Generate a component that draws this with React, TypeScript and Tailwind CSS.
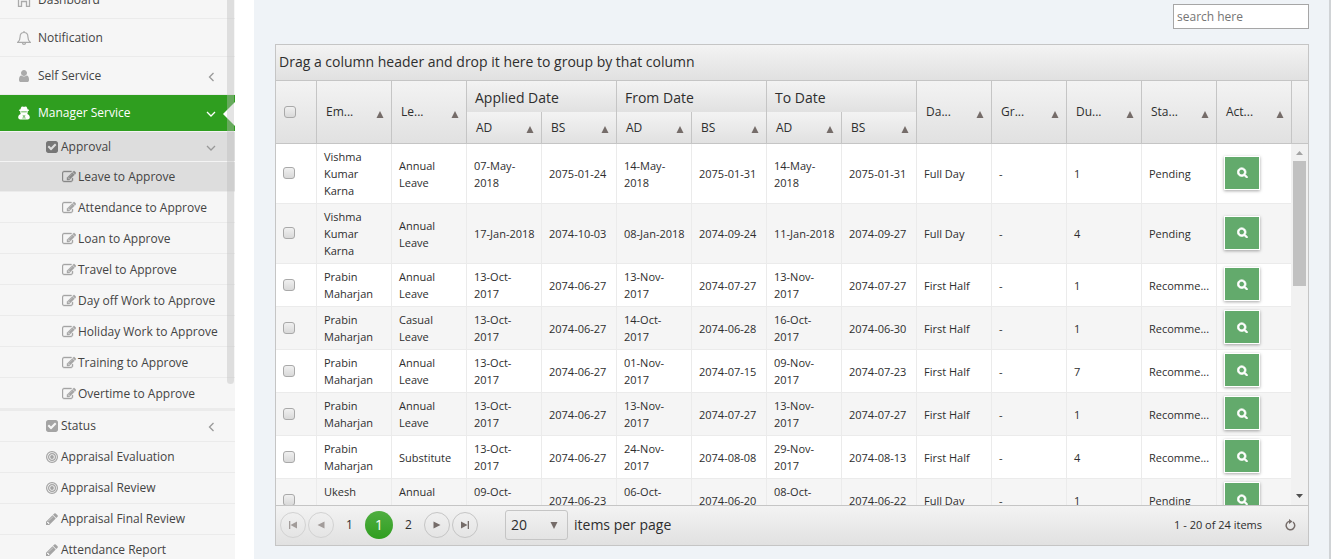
import React from "react";

const GLYPHS = {
  search:
    "M1216 832q0-185-131.5-316.5t-316.5-131.5-316.5 131.5-131.5 316.5 131.5 316.5 316.5 131.5 316.5-131.5 131.5-316.5zm512 832q0 52-38 90t-90 38q-54 0-90-38l-343-342q-179 124-399 124-143 0-273.5-55.5t-225-150-150-225-55.5-273.5 55.5-273.5 150-225 225-150 273.5-55.5 273.5 55.5 225 150 150 225 55.5 273.5q0 220-124 399l343 343q37 37 37 90z",
  check:
    "M813 1299l614-614q19-19 19-45t-19-45l-102-102q-19-19-45-19t-45 19l-467 467-211-211q-19-19-45-19t-45 19l-102 102q-19 19-19 45t19 45l358 358q19 19 45 19t45-19zm851-883v960q0 119-84.5 203.5t-203.5 84.5h-960q-119 0-203.5-84.5t-84.5-203.5v-960q0-119 84.5-203.5t203.5-84.5h960q119 0 203.5 84.5t84.5 203.5z",
  edit: "M888 1184l116-116-152-152-116 116v56h96v96h56zm440-720q-16-16-33 1l-350 350q-17 17-1 33t33-1l350-350q17-17 1-33zm80 594v190q0 119-84.5 203.5t-203.5 84.5h-832q-119 0-203.5-84.5t-84.5-203.5v-832q0-119 84.5-203.5t203.5-84.5h832q63 0 117 25 15 7 18 23 3 17-9 29l-49 49q-14 14-32 8-23-6-45-6h-832q-66 0-113 47t-47 113v832q0 66 47 113t113 47h832q66 0 113-47t47-113v-126q0-13 9-22l64-64q15-15 35-7t20 29zm-96-738l288 288-672 672h-288v-288zm444 132l-92 92-288-288 92-92q28-28 68-28t68 28l152 152q28 28 28 68t-28 68z",
  pencil:
    "M491 1536l91-91-235-235-91 91v107h128v128h107zm523-928q0-22-22-22-10 0-17 7l-542 542q-7 7-7 17 0 22 22 22 10 0 17-7l542-542q7-7 7-17zm-54-192l416 416-832 832h-416v-416zm683 96q0 53-37 90l-166 166-416-416 166-165q36-38 90-38 53 0 91 38l235 234q37 39 37 91z",
  user: "M1536 1399q0 109-62.5 187t-150.5 78h-854q-88 0-150.5-78t-62.5-187q0-85 8.500-160.5t31.5-152 58.5-131 94-89 134.5-34.5q131 128 313 128t313-128q76 0 134.5 34.5t94 89 58.5 131 31.5 152 8.500 160.5zm-256-887q0 159-112.5 271.5t-271.5 112.5-271.5-112.5-112.5-271.5 112.5-271.5 271.5-112.5 271.5 112.5 112.5 271.5z",
};

function Glyph({ name, className }: { name: keyof typeof GLYPHS; className: string }) {
  return (
    <svg viewBox="0 0 1792 1792" fill="currentColor" stroke="currentColor" className={className} aria-hidden="true">
      <path d={GLYPHS[name]} />
    </svg>
  );
}

function Home() {
  return (
    <svg viewBox="0 0 14 14" fill="none" stroke="currentColor" strokeWidth="1.3" className="size-[14px]" aria-hidden="true">
      <path d="M1.500 5.500 7 1l5.500 4.500V13.300H9.500V8.500h-5v4.800h-3z" />
    </svg>
  );
}

function Bell() {
  return (
    <svg viewBox="0 0 14 14" fill="none" stroke="currentColor" strokeWidth="1.2" className="size-[14px]" aria-hidden="true">
      <path d="M7 0v1.500M.8 11.300c1.700-1.300 2.300-3 2.300-5.500C3.100 3.300 4.700 1.500 7 1.500s3.900 1.800 3.900 4.300c0 2.500.6 4.200 2.300 5.500zM5.400 11.600c.1 1.100.7 1.800 1.600 1.800s1.500-.7 1.600-1.800" />
    </svg>
  );
}

function Agent() {
  return (
    <svg viewBox="0 0 14 14" fill="currentColor" fillRule="evenodd" className="mr-[7px] size-[14px]" aria-hidden="true">
      <path d="M4.600.8C5.300.2 6.200.8 7 .8s1.700-.6 2.400 0c.6.600.9 1.500 1.100 2.500 1 .2 1.600.5 1.600.9 0 .5-.6.8-1.400 1v1.200c0 .6-.2 1.100-.5 1.600 1.600.5 2.600 1.500 2.600 3.600 0 1.100-.8 1.900-2 1.900H3.200c-1.200 0-2-.8-2-1.900 0-2.100 1-3.100 2.600-3.600-.3-.5-.5-1-.5-1.600V5.200c-.8-.2-1.400-.5-1.400-1 0-.4.600-.7 1.600-.9.2-1 .5-1.900 1.100-2.500zM4.200 5.600v.6h5.600v-.6zM5.300 8.700l.8 1-.5 3h.7L6.700 9.500zM8.700 8.700l-.8 1 .5 3h-.7L7.300 9.500z" />
    </svg>
  );
}

function Bullseye() {
  return (
    <svg viewBox="0 0 12 12" fill="none" stroke="currentColor" strokeWidth="1.200" className="size-3" aria-hidden="true">
      <circle cx="6" cy="6" r="5.400" />
      <circle cx="6" cy="6" r="3.400" />
      <circle cx="6" cy="6" r="1.900" fill="currentColor" stroke="none" />
    </svg>
  );
}

function Chevron({ dir }: { dir: "left" | "down" }) {
  return (
    <svg viewBox="0 0 10 10" fill="none" stroke="currentColor" strokeWidth="1.3" className="mt-[2px] size-[10px]" aria-hidden="true">
      <path d={dir === "left" ? "M7.500 1 3.500 5l4 4" : "M1 3 5 7l4-4"} />
    </svg>
  );
}

const NAV_ROW = "flex items-center text-[12px] leading-4 text-[#444]";

function TopLink({ icon, label, children }: { icon: React.ReactNode; label: string; children?: React.ReactNode }) {
  return (
    <a href="#" className={`${NAV_ROW} h-[38px] border-b border-[#ebebeb] pr-[19px] pl-[17px]`}>
      <span className="mr-[7px] flex w-[14px] justify-center text-[#aaa]">{icon}</span>
      {label}
      <span className="ml-auto text-[#999]">{children}</span>
    </a>
  );
}

function SubLink({ icon, label, children }: { icon: React.ReactNode; label: string; children?: React.ReactNode }) {
  return (
    <a href="#" className={`${NAV_ROW} h-[31px] border-b border-[#ebebeb] pr-[19px] pl-[46px]`}>
      <span className="mr-[3px] flex w-3 justify-center text-[#a4a4a4]">{icon}</span>
      {label}
      <span className="ml-auto text-[#999]">{children}</span>
    </a>
  );
}

const APPROVALS = [
  "Attendance to Approve",
  "Loan to Approve",
  "Travel to Approve",
  "Day off Work to Approve",
  "Holiday Work to Approve",
  "Training to Approve",
  "Overtime to Approve",
];

function Sidebar() {
  return (
    <aside className="relative w-[235px] shrink-0 overflow-hidden bg-[#f6f6f6]">
      <nav className="-mt-[19px]">
        <TopLink icon={<Home />} label="Dashboard" />
        <TopLink icon={<Bell />} label="Notification" />
        <TopLink icon={<Glyph name="user" className="size-[14px]" />} label="Self Service">
          <Chevron dir="left" />
        </TopLink>
        <a href="#" className="relative flex h-9 items-center bg-[#2f9e1f] pr-[19px] pl-[17px] text-[12px] leading-4 text-white">
          <Agent />
          Manager Service
          <span className="ml-auto">
            <Chevron dir="down" />
          </span>
          <svg viewBox="0 0 12 24" className="absolute top-[7px] right-0 h-6 w-3 fill-white" aria-hidden="true">
            <path d="M12 0v24L0 12z" />
          </svg>
        </a>
        <a href="#" className={`${NAV_ROW} h-[31px] border-y border-[#f4f4f4] bg-[#ddd] pr-[19px] pl-[46px]`}>
          <Glyph name="check" className="mr-[2px] -ml-px size-[14px] text-[#777]" />
          Approval
          <span className="ml-auto text-[#999]">
            <Chevron dir="down" />
          </span>
        </a>
        <a href="#" className={`${NAV_ROW} h-[30px] border-b border-[#ebebeb] bg-[#ddd] pl-[62px]`}>
          <Glyph name="edit" className="mr-[2px] size-[14px] [stroke-width:50px] text-[#888]" />
          Leave to Approve
        </a>
        {APPROVALS.map((label) => (
          <a key={label} href="#" className={`${NAV_ROW} h-[31px] border-b border-[#ebebeb] pt-px pl-[62px]`}>
            <Glyph name="edit" className="mr-[2px] size-[14px] [stroke-width:50px] text-[#a4a4a4]" />
            {label}
          </a>
        ))}
        <div className="border-t-2 border-[#ebebeb]">
          <SubLink icon={<Glyph name="check" className="size-[14px] shrink-0" />} label="Status">
            <Chevron dir="left" />
          </SubLink>
          <SubLink icon={<Bullseye />} label="Appraisal Evaluation" />
          <SubLink icon={<Bullseye />} label="Appraisal Review" />
          <SubLink icon={<Glyph name="pencil" className="size-[14px] shrink-0" />} label="Appraisal Final Review" />
          <SubLink icon={<Glyph name="pencil" className="size-[14px] shrink-0" />} label="Attendance Report" />
        </div>
      </nav>
      <div className="absolute top-0 right-px h-[384px] w-[7px] rounded-b-[4px] bg-[#bbb]/40" />
    </aside>
  );
}

const BOX =
  "block size-3 appearance-none rounded-[3px] border border-[#a9a9a9] bg-linear-to-b from-[#f0f0f0] to-[#d9d9d9] checked:bg-[#2f9e1f]";
const GRAD = "bg-linear-to-b from-[#f3f3f3] to-[#e1e1e1]";

function SortArrow() {
  return (
    <svg viewBox="0 0 8 7" className="mt-1 h-[7px] w-2 shrink-0 fill-[#756c69]" aria-hidden="true">
      <path d="M4 0 7.500 7H.5z" />
    </svg>
  );
}

function SortHead({ label, rowSpan }: { label: string; rowSpan?: number }) {
  return (
    <th rowSpan={rowSpan} className={`border-l border-[#c5c5c5] p-0 font-normal ${GRAD}`}>
      <button type="button" className="flex w-full items-center justify-between pr-[7px] pl-[9px] text-[12px] leading-4">
        {label}
        <SortArrow />
      </button>
    </th>
  );
}

function Columns() {
  return (
    <colgroup>
      <col className="w-10" />
      {Array.from({ length: 13 }, (_, i) => (
        <col key={i} />
      ))}
    </colgroup>
  );
}

const ROWS = [
  ["Vishma Kumar Karna", "Annual Leave", "07-May-2018", "2075-01-24", "14-May-2018", "2075-01-31", "14-May-2018", "2075-01-31", "Full Day", "-", "1", "Pending"],
  ["Vishma Kumar Karna", "Annual Leave", "17-Jan-2018", "2074-10-03", "08-Jan-2018", "2074-09-24", "11-Jan-2018", "2074-09-27", "Full Day", "-", "4", "Pending"],
  ["Prabin Maharjan", "Annual Leave", "13-Oct-2017", "2074-06-27", "13-Nov-2017", "2074-07-27", "13-Nov-2017", "2074-07-27", "First Half", "-", "1", "Recomme..."],
  ["Prabin Maharjan", "Casual Leave", "13-Oct-2017", "2074-06-27", "14-Oct-2017", "2074-06-28", "16-Oct-2017", "2074-06-30", "First Half", "-", "1", "Recomme..."],
  ["Prabin Maharjan", "Annual Leave", "13-Oct-2017", "2074-06-27", "01-Nov-2017", "2074-07-15", "09-Nov-2017", "2074-07-23", "First Half", "-", "7", "Recomme..."],
  ["Prabin Maharjan", "Annual Leave", "13-Oct-2017", "2074-06-27", "13-Nov-2017", "2074-07-27", "13-Nov-2017", "2074-07-27", "First Half", "-", "1", "Recomme..."],
  ["Prabin Maharjan", "Substitute", "13-Oct-2017", "2074-06-27", "24-Nov-2017", "2074-08-08", "29-Nov-2017", "2074-08-13", "First Half", "-", "4", "Recomme..."],
  ["Ukesh Maharjan", "Annual Leave", "09-Oct-2017", "2074-06-23", "06-Oct-2017", "2074-06-20", "08-Oct-2017", "2074-06-22", "Full Day", "-", "1", "Pending"],
];

function Grid() {
  return (
    <section className="mt-[15px] border border-[#c5c5c5] bg-white text-[#2e2e2e]">
      <div className={`flex h-9 items-center border-b border-[#c5c5c5] px-[3px] pb-[2px] text-[14px] leading-5 ${GRAD}`}>
        Drag a column header and drop it here to group by that column
      </div>
      <div className={`flex border-b border-[#c5c5c5] ${GRAD}`}>
        <div className="min-w-0 flex-1">
          <table className="h-[62px] w-full table-fixed border-separate border-spacing-0 text-left">
            <Columns />
            <thead>
              <tr className="h-[31px]">
                <th rowSpan={2} className={`p-0 pl-2 ${GRAD}`}>
                  <input type="checkbox" aria-label="Select all" className={BOX} />
                </th>
                <SortHead label="Em..." rowSpan={2} />
                <SortHead label="Le..." rowSpan={2} />
                {["Applied Date", "From Date", "To Date"].map((label) => (
                  <th key={label} colSpan={2} className={`border-l border-[#c5c5c5] p-0 pt-[2px] pl-2 text-[14px] leading-5 font-normal ${GRAD}`}>
                    {label}
                  </th>
                ))}
                {["Da...", "Gr...", "Du...", "Sta...", "Act..."].map((label) => (
                  <SortHead key={label} label={label} rowSpan={2} />
                ))}
              </tr>
              <tr className="h-[31px]">
                {["AD", "BS", "AD", "BS", "AD", "BS"].map((label, i) => (
                  <SortHead key={i} label={label} />
                ))}
              </tr>
            </thead>
          </table>
        </div>
        <div className="w-[17px] border-l border-[#c5c5c5]" />
      </div>
      <div className="flex h-[361px] overflow-hidden">
        <div className="min-w-0 flex-1">
          <table className="w-full table-fixed border-separate border-spacing-0 text-left text-[11px] leading-[17px]">
            <Columns />
            <tbody>
              {ROWS.map((row, r) => (
                <tr key={r} className="even:bg-[#f5f5f5]">
                  <td className="border-b border-[#ebebeb] p-0 pb-px pl-[7px]">
                    <input type="checkbox" aria-label={`Select ${row[0]}`} className={BOX} />
                  </td>
                  {row.map((value, c) => (
                    <td key={c} className="border-b border-l border-[#ebebeb] py-1 pr-[5px] pl-[7px]">
                      {value}
                    </td>
                  ))}
                  <td className="border-b border-l border-[#ebebeb] pt-[3px] pb-[5px] pl-[7px]">
                    <button
                      type="button"
                      aria-label="View"
                      className="flex h-[34px] w-9 items-center justify-center border border-white bg-[#63aa6c] text-white shadow-[0_1px_3px_rgba(0,0,0,0.35)]"
                    >
                      <Glyph name="search" className="size-[11px] [stroke-width:130px]" />
                    </button>
                  </td>
                </tr>
              ))}
            </tbody>
          </table>
        </div>
        <div className="flex w-[17px] flex-col items-center bg-[#f1f1f1]">
          <svg viewBox="0 0 17 17" className="size-[17px] fill-[#a3a3a3]" aria-hidden="true">
            <path d="M8.500 7 12 11H5z" />
          </svg>
          <div className="h-[125px] w-[13px] bg-[#c1c1c1]" />
          <svg viewBox="0 0 17 17" className="mt-auto size-[17px] fill-[#505050]" aria-hidden="true">
            <path d="M5 6h7l-3.500 4z" />
          </svg>
        </div>
      </div>
      <Pager />
    </section>
  );
}

function RoundButton({ label, path, disabled }: { label: string; path: string; disabled?: boolean }) {
  return (
    <button
      type="button"
      aria-label={label}
      disabled={disabled}
      className="flex size-[26px] items-center justify-center rounded-full border border-[#c5c5c5] text-[#756c69] disabled:border-[#d2d2d2] disabled:text-[#a29c9a]"
    >
      <svg viewBox="0 0 8 8" fill="currentColor" className="size-2" aria-hidden="true">
        <path d={path} />
      </svg>
    </button>
  );
}

function Pager() {
  return (
    <footer className={`flex h-10 items-center border-t border-[#c5c5c5] pr-3 pb-px pl-1 text-[12px] leading-4 ${GRAD}`}>
      <div className="flex gap-[2px]">
        <RoundButton label="First page" disabled path="M0 0h1.300v8H0zM8 0.500v7L1.500 4z" />
        <RoundButton label="Previous page" disabled path="M7.500 0.500v7L.5 4z" />
      </div>
      <span className="w-[31px] text-center">1</span>
      <button type="button" aria-current="page" className="size-7 rounded-full bg-linear-to-b from-[#4fae40] to-[#2f9e1f] text-[14px] leading-5 text-white">
        1
      </button>
      <a href="#" className="w-[31px] text-center">
        2
      </a>
      <div className="flex gap-[2px]">
        <RoundButton label="Next page" path="M.5.5v7l7-3.500z" />
        <RoundButton label="Last page" path="M6.700 0H8v8H6.700zM0 0.500v7L6.500 4z" />
      </div>
      <label className="ml-[27px] flex items-center gap-[6px] text-[14px] leading-5">
        <span className="relative flex items-center">
          <select className="h-[30px] w-[63px] appearance-none rounded-[3px] border border-[#c5c5c5] bg-transparent pl-[5px]">
            <option>20</option>
          </select>
          <svg viewBox="0 0 8 7" className="pointer-events-none absolute right-[10px] h-[7px] w-2 fill-[#756c69]" aria-hidden="true">
            <path d="M.5 0h7L4 7z" />
          </svg>
        </span>
        items per page
      </label>
      <span className="ml-auto text-[11px]">1 - 20 of 24 items</span>
      <button type="button" aria-label="Refresh" className="ml-[22px] text-[#756c69]">
        <svg viewBox="0 0 12 12" fill="none" stroke="currentColor" strokeWidth="1.500" className="size-3" aria-hidden="true">
          <path d="M9 3A4.300 4.300 0 1 1 5 2.400" />
          <path d="M5 0v5L8.500 2.500z" fill="currentColor" stroke="none" />
        </svg>
      </button>
    </footer>
  );
}

export default function App() {
  return (
    <div className="flex h-screen overflow-hidden bg-white font-['Open_Sans',sans-serif]">
      <Sidebar />
      <main className="mr-[7px] ml-[19px] min-w-0 flex-1 border-r-2 border-[#d0d3d6] bg-[#eff3f7] pt-1 pr-5 pl-[21px]">
        <div className="flex justify-end">
          <input
            type="search"
            aria-label="Search"
            placeholder="search here"
            className="h-[25px] w-[136px] border border-[#a6a6a6] bg-white px-[3px] text-[12px] leading-4 placeholder:text-[#757575]"
          />
        </div>
        <Grid />
      </main>
    </div>
  );
}
